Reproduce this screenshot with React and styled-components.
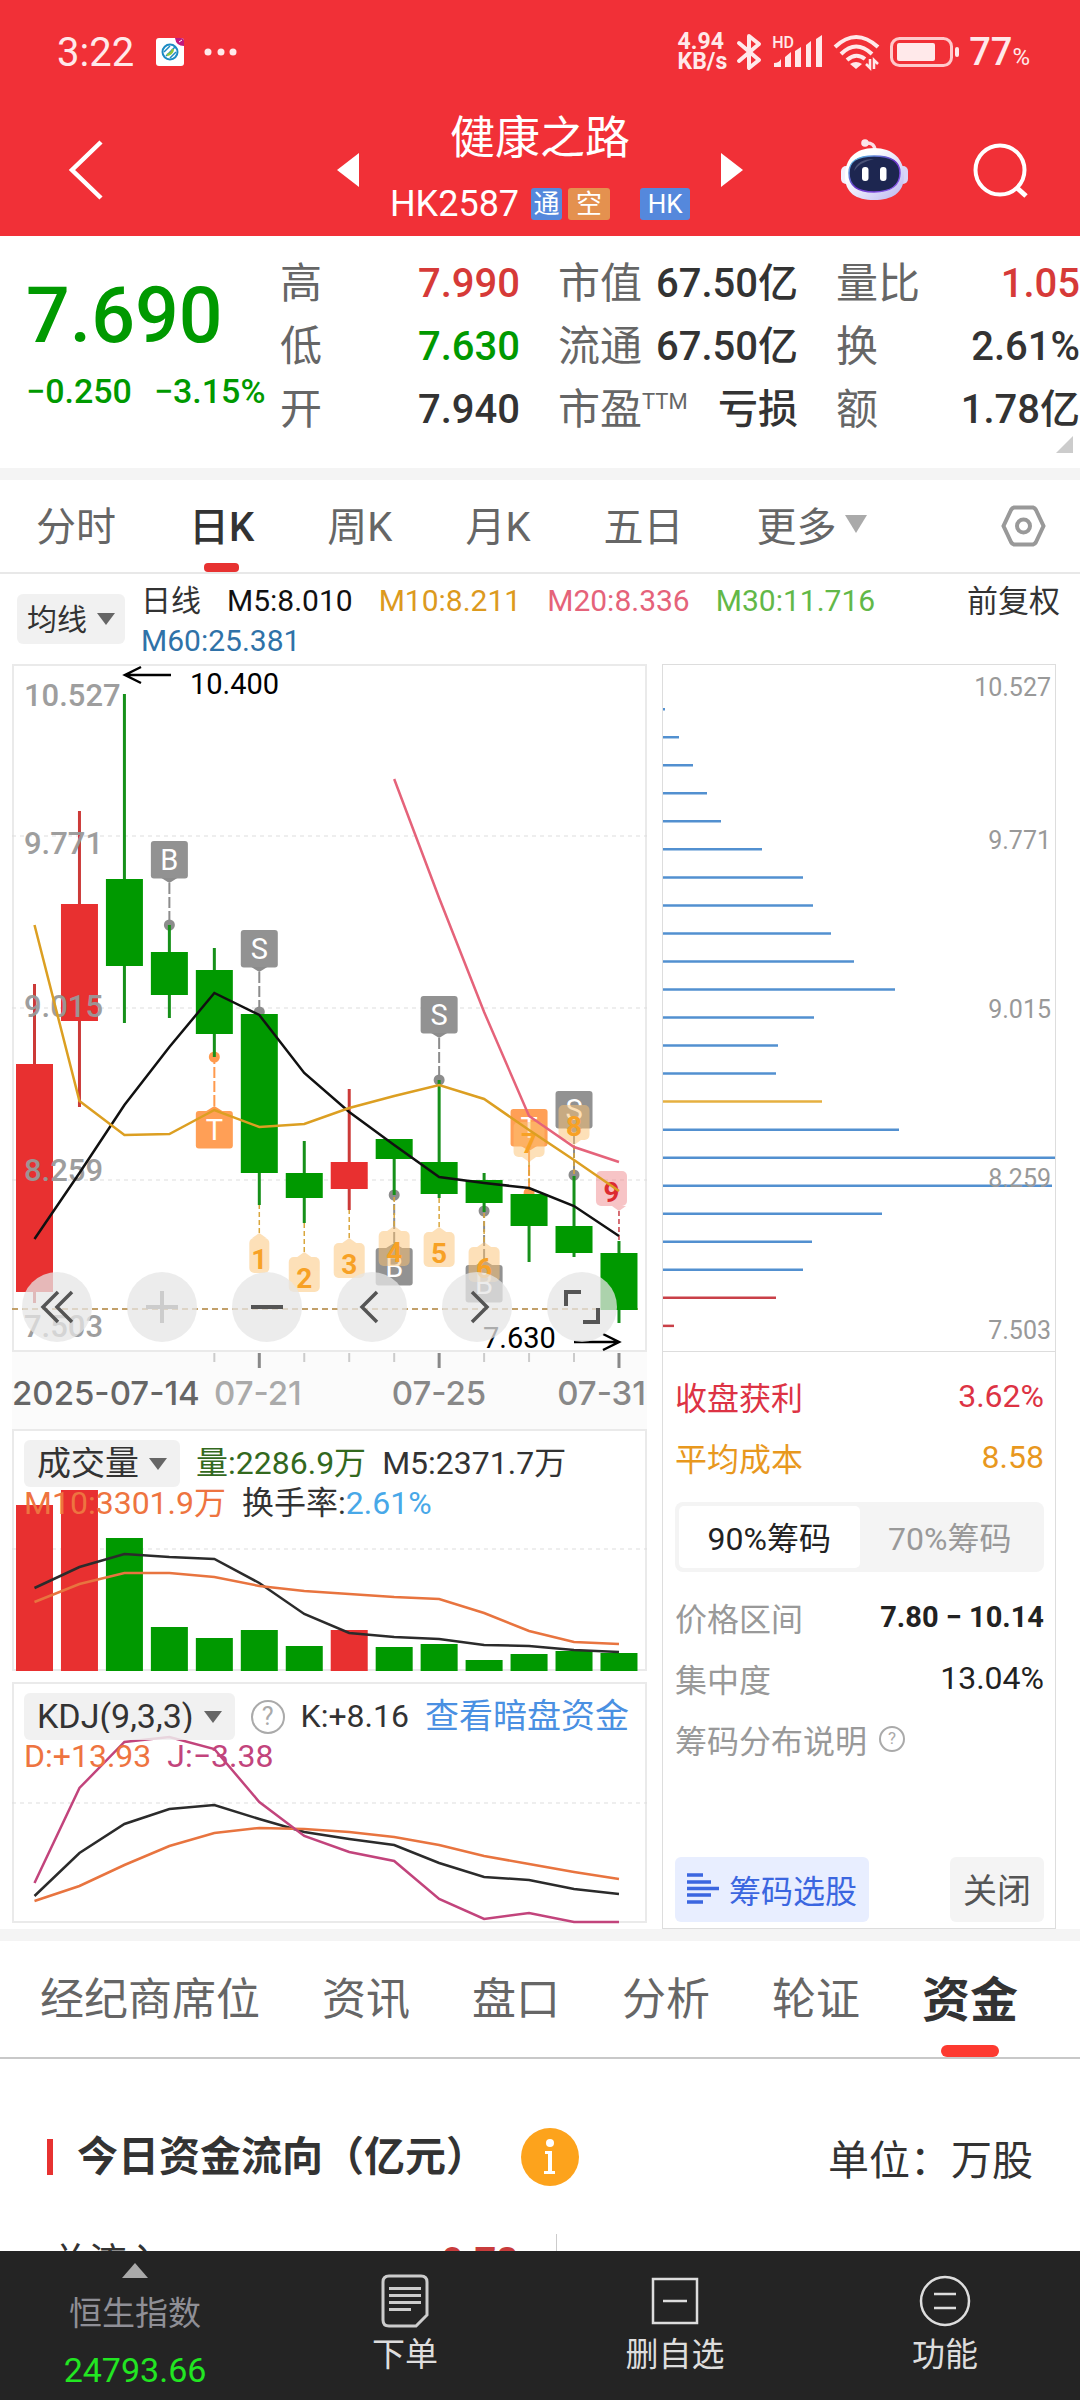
import React, { useState } from 'react';
import styled, { createGlobalStyle } from 'styled-components';

const RED = '#e73231';
const GREEN = '#009900';

const GlobalStyle = createGlobalStyle`
  * {
    box-sizing: border-box;
  }
  body {
    margin: 0;
    background: #fff;
    color: #333;
    font-family: Roboto, 'Noto Sans CJK SC', sans-serif;
  }
  button, select {
    font: inherit;
    color: inherit;
    border: 0;
    padding: 0;
    background: none;
  }
  a {
    color: inherit;
    text-decoration: none;
  }
  svg {
    display: block;
    overflow: visible;
  }
`;

const Page = styled.div`
  min-height: 100vh;
  overflow: hidden;
`;

/* ---------- header ---------- */

const Header = styled.header`
  background: #f13037;
  color: #fff;
`;

const StatusBar = styled.div`
  display: flex;
  align-items: center;
  height: 104px;
  padding: 0 50px 0 57px;
  color: #ffe9ea;
`;

const Clock = styled.span`
  font-size: 40px;
  margin-right: 22px;
`;

const StatusRight = styled.div`
  display: flex;
  align-items: center;
  gap: 10px;
  margin-left: auto;
`;

const NetSpeed = styled.span`
  font-size: 23px;
  line-height: 20px;
  font-weight: 700;
`;

const Battery = styled.span`
  font-size: 38px;
  font-weight: 500;
  small {
    font-size: 24px;
    font-weight: 400;
  }
`;

const TitleBar = styled.div`
  display: grid;
  grid-template-columns: 1fr 406px 1fr;
  align-items: center;
  height: 132px;
  padding: 0 51px;
`;

const IconButton = styled.button`
  display: flex;
`;

const BackButton = styled(IconButton)`
  padding-left: 14px;
`;

const StockSwitch = styled.div`
  display: flex;
  align-items: center;
  justify-content: space-between;
`;

const StockTitle = styled.div`
  display: flex;
  flex-direction: column;
  align-items: center;
  h1 {
    margin: 0;
    font-size: 45px;
    line-height: 68px;
    font-weight: 400;
  }
`;

const CodeRow = styled.div`
  display: flex;
  align-items: center;
  height: 62px;
  font-size: 36px;
`;

const Tag = styled.span`
  width: ${(p) => p.$width || 42}px;
  height: 32px;
  margin-left: ${(p) => p.$gap || 6}px;
  border-radius: 3px;
  background: ${(p) => p.$color};
  font-size: 26px;
  line-height: 32px;
  text-align: center;
`;

const Actions = styled.div`
  display: flex;
  align-items: center;
  justify-content: flex-end;
  gap: 64px;
`;

/* ---------- quote ---------- */

const Quote = styled.section`
  position: relative;
  display: grid;
  grid-template-columns: 216px 240px 240px 1fr;
  column-gap: 38px;
  height: 232px;
  padding: 16px 0 0 26px;
`;

const LastPrice = styled.div`
  color: ${GREEN};
  white-space: nowrap;
  strong {
    display: block;
    margin-top: 14px;
    font-size: 77px;
    line-height: 100px;
    font-weight: 500;
  }
  span {
    font-size: 34px;
    font-weight: 500;
    line-height: 50px;
    margin-right: 22px;
  }
`;

const Stats = styled.dl`
  margin: 0;
  div {
    display: flex;
    justify-content: space-between;
    height: 63px;
    line-height: 63px;
    font-size: 42px;
    white-space: nowrap;
  }
  dt {
    color: #666;
    display: flex;
  }
  sup {
    font-size: 22px;
    line-height: 48px;
    vertical-align: top;
  }
`;

const Value = styled.dd`
  margin: 0;
  font-size: 40px;
  font-weight: 500;
  color: ${(p) => p.$color || '#333'};
`;

const Corner = styled.svg`
  position: absolute;
  right: 7px;
  bottom: 15px;
`;

const Band = styled.div`
  height: 12px;
  background: #f4f4f4;
`;

/* ---------- period tabs ---------- */

const PeriodTabs = styled.nav`
  display: flex;
  align-items: center;
  gap: 73px;
  height: 94px;
  padding: 0 34px 0 36px;
  border-bottom: 2px solid #e8e8e8;
  font-size: 40px;
`;

const PeriodTab = styled.button`
  position: relative;
  display: flex;
  align-items: center;
  gap: 8px;
  height: 92px;
  padding-bottom: 4px;
  color: ${(p) => (p.$active ? '#333' : '#666')};
  font-weight: ${(p) => (p.$active ? 500 : 400)};
  &::after {
    content: '';
    display: ${(p) => (p.$active ? 'block' : 'none')};
    position: absolute;
    left: 50%;
    bottom: 0;
    width: 35px;
    height: 9px;
    margin-left: -18px;
    border-radius: 4px;
    background: ${RED};
  }
`;

const Push = styled.span`
  margin-left: auto;
`;

/* ---------- chart ---------- */

const Legend = styled.div`
  display: flex;
  align-items: center;
  height: 90px;
  padding: 0 20px 0 17px;
  font-size: 30px;
`;

const LegendItems = styled.div`
  flex: 1;
  display: flex;
  flex-wrap: wrap;
  column-gap: 26px;
  margin: 4px 48px 0 16px;
  line-height: 40px;
`;

const Adjust = styled.button`
  align-self: flex-start;
  font-size: 31px;
  line-height: 56px;
`;

const Picker = styled.label`
  display: flex;
  align-items: center;
  gap: 10px;
  height: ${(p) => p.$height || 47}px;
  padding: 0 ${(p) => p.$pad || 13}px;
  border-radius: 6px;
  background: rgba(238, 238, 238, 0.85);
  font-size: ${(p) => p.$size || 34}px;
  select {
    appearance: none;
    field-sizing: content;
  }
`;

const ChartGrid = styled.section`
  display: grid;
  grid-template-columns: 635fr 394fr;
  column-gap: 15px;
  padding: 0 24px 0 12px;
  svg text {
    font-family: Roboto, sans-serif;
  }
`;

const Pane = styled.div`
  display: grid;
  margin-bottom: ${(p) => p.$gap || 0}px;
  > * {
    grid-area: 1 / 1;
  }
`;

const Plot = styled.svg`
  width: 100%;
  height: auto;
`;

const DateLabels = styled.g`
  && text {
    font-family: Inter, sans-serif;
  }
`;

const PaneHead = styled.div`
  z-index: 1;
  align-self: start;
  display: flex;
  flex-wrap: wrap;
  align-items: center;
  column-gap: 16px;
  padding: 11px 4px 0 12px;
  font-size: 32px;
  line-height: 33px;
`;

const Tint = styled.span`
  color: ${(p) => p.$color || '#333'};
`;

const HelpButton = styled.button`
  display: grid;
  place-items: center;
  width: ${(p) => p.$size}px;
  height: ${(p) => p.$size}px;
  border: 2px solid currentColor;
  border-radius: 50%;
  color: #aaa;
  font-size: ${(p) => p.$size - 9}px;
  line-height: 1;
`;

const DarkPoolLink = styled.a`
  color: #4a90e2;
  font-size: 34px;
`;

const Controls = styled.div`
  z-index: 1;
  align-self: end;
  display: flex;
  justify-content: space-between;
  padding: 0 30px 10px 10px;
`;

const RoundButton = styled.button`
  display: grid;
  place-items: center;
  width: 70px;
  height: 70px;
  border-radius: 50%;
  background: rgba(230, 230, 230, 0.75);
  color: ${(p) => (p.$dim ? '#ccc' : '#555')};
`;

/* ---------- chips panel ---------- */

const Chips = styled.aside`
  display: flex;
  flex-direction: column;
  border: 1px solid #ddd;
  border-width: 0 1px 1px 0;
  font-size: 32px;
`;

const ChipsBody = styled.div`
  flex: 1;
  display: flex;
  flex-direction: column;
  padding: 14px 11px 6px 12px;
  border-left: 1px solid #ddd;
`;

const ChipRow = styled.div`
  display: flex;
  align-items: center;
  justify-content: space-between;
  height: 61px;
  padding-bottom: 2px;
  color: ${(p) => p.$color || '#999'};
  b {
    font-size: 29px;
    font-weight: 700;
    color: #222;
  }
  em {
    font-style: normal;
    color: #222;
  }
`;

const Explain = styled.div`
  display: flex;
  align-items: center;
  gap: 12px;
  height: 61px;
  padding-bottom: 2px;
  color: #999;
`;

const Segment = styled.div`
  display: flex;
  height: 70px;
  margin: 14px 0 15px;
  padding: 4px;
  border-radius: 8px;
  background: #f4f4f4;
`;

const SegmentButton = styled.button`
  flex: 1;
  padding-bottom: 2px;
  border-radius: 5px;
  background: ${(p) => (p.$active ? '#fff' : 'transparent')};
  color: ${(p) => (p.$active ? '#222' : '#999')};
`;

const ChipActions = styled.div`
  display: flex;
  justify-content: space-between;
  margin-top: auto;
`;

const PickButton = styled.button`
  display: flex;
  align-items: center;
  gap: 10px;
  height: 65px;
  padding: 0 12px 2px;
  border-radius: 6px;
  background: #e8eeff;
  color: #3b66e0;
`;

const CloseButton = styled.button`
  width: 94px;
  height: 65px;
  padding-bottom: 2px;
  border-radius: 6px;
  background: #f4f4f4;
  color: #555;
  font-size: 34px;
`;

/* ---------- lower tabs + fund flow ---------- */

const InfoTabs = styled.nav`
  display: flex;
  gap: 62px;
  height: 118px;
  padding-left: 40px;
  border-bottom: 2px solid #c8c8c8;
  font-size: 44px;
  white-space: nowrap;
`;

const InfoTab = styled.button`
  position: relative;
  padding-bottom: 6px;
  color: #666;
  &[aria-current] {
    color: #333;
    font-size: 48px;
    font-weight: 700;
  }
  &[aria-current]::after {
    content: '';
    position: absolute;
    left: 50%;
    bottom: 0;
    width: 58px;
    height: 12px;
    margin-left: -29px;
    border-radius: 6px;
    background: #fd3a30;
  }
`;

const FundHead = styled.div`
  display: flex;
  align-items: center;
  height: 58px;
  margin-top: 69px;
  padding: 0 47px;
  font-size: 41px;
  h2 {
    margin: 0 34px 0 0;
    padding-left: 24px;
    font-size: 41px;
    line-height: 58px;
    font-weight: 700;
    white-space: nowrap;
  }
`;

const Marker = styled.i`
  width: 6px;
  height: 36px;
  background: ${RED};
`;

const FundRow = styled.div`
  display: grid;
  grid-template-columns: 506px 1fr;
  margin: 48px 0 0 51px;
  font-size: 38px;
  line-height: 56px;
  > div {
    display: flex;
    justify-content: space-between;
    padding-right: 38px;
    border-right: 1px solid #ccc;
  }
  b {
    color: #c83c3c;
  }
`;

const BottomNav = styled.nav`
  position: fixed;
  left: 0;
  right: 0;
  bottom: 0;
  z-index: 2;
  display: grid;
  grid-template-columns: repeat(4, 1fr);
  height: 149px;
  background: #242424;
  color: #ddd;
`;

const NavButton = styled.button`
  display: flex;
  flex-direction: column;
  align-items: center;
  gap: 8px;
  padding-top: 23px;
  font-size: 33px;
  line-height: 38px;
`;

const IndexButton = styled(NavButton)`
  gap: 14px;
  padding-top: 12px;
  line-height: 43px;
  color: #8f8f96;
  strong {
    font-size: 34px;
    font-weight: 400;
    color: #22e622;
  }
`;

/* ---------- data ---------- */
// every pane under the chart shares one canvas, so x and y run on from pane to pane

const LEFT = 12;
const RIGHT = 647;
const cx = (i) => 34.5 + i * 44.96;
const toPoints = (ys, from = 0) => ys.map((y, i) => `${cx(i + from)},${y}`).join(' ');

// [up, bodyTop, bodyBottom, wickTop, wickBottom]
const candles = [
  [1, 1064, 1292, 984, 1303],
  [1, 904, 1021, 811, 1107],
  [0, 879, 966, 694, 1023],
  [0, 952, 995, 925, 1018],
  [0, 970, 1034, 948, 1057],
  [0, 1014, 1173, 1014, 1205],
  [0, 1173, 1198, 1141, 1223],
  [1, 1162, 1189, 1089, 1210],
  [0, 1139, 1159, 1139, 1195],
  [0, 1162, 1194, 1080, 1198],
  [0, 1180, 1203, 1173, 1212],
  [0, 1194, 1226, 1194, 1262],
  [0, 1226, 1253, 1176, 1257],
  [0, 1253, 1310, 1241, 1323],
];
const ma5 = [1239, 1173, 1105, 1047, 993, 1015, 1073, 1112, 1145, 1177, 1183, 1188, 1206, 1236];
const ma10 = [925, 1101, 1135, 1134, 1110, 1127, 1124, 1108, 1096, 1085, 1099, 1130, 1160, 1191];
const ma20 = [779, 898, 1012, 1116, 1147, 1162];

const axisPrices = [
  ['10.527', 706, 687],
  ['9.771', 854, 840],
  ['9.015', 1017, 1009],
  ['8.259', 1181, 1178],
  ['7.503', 1337, 1330],
];

// [candle, letter, boxTop, dotY]
const trades = [
  [3, 'B', 841, 925],
  [5, 'S', 930, 1012],
  [9, 'S', 996, 1080],
  [12, 'S', 1091, 1175],
  [4, 'T', 1111, 1057],
  [11, 'T', 1109, 1193],
  [8, 'B', 1248, 1195],
  [10, 'B', 1265, 1211],
];

// [candle, boxTop, lineEnd]
const counts = [
  [5, 1238, 1205],
  [6, 1257, 1223],
  [7, 1243, 1210],
  [8, 1231, 1195],
  [9, 1232, 1198],
  [10, 1247, 1212],
  [11, 1122, 1193],
  [12, 1105, 1175],
  [13, 1171, 1241],
];

const volumes = [1505, 1490, 1538, 1627, 1638, 1630, 1646, 1630, 1647, 1644, 1660, 1654, 1651, 1653];
const volMa5 = [1588, 1567, 1554, 1557, 1559, 1583, 1614, 1633, 1637, 1639, 1645, 1646, 1650, 1652];
const volMa10 = [1602, 1584, 1573, 1573, 1577, 1586, 1591, 1594, 1597, 1599, 1613, 1631, 1642, 1644];

const kLine = [1896, 1853, 1824, 1809, 1805, 1819, 1832, 1839, 1845, 1863, 1877, 1880, 1889, 1894];
const dLine = [1901, 1886, 1865, 1846, 1833, 1828, 1829, 1832, 1837, 1845, 1856, 1864, 1872, 1879];
const jLine = [1883, 1788, 1742, 1737, 1749, 1802, 1836, 1852, 1861, 1899, 1919, 1913, 1922, 1922];

const chipBars = [
  2, 16, 30, 44, 58, 99, 140, 150, 168, 191, 232, 151, 115, 113, 159, 236, 392, 389, 219, 149, 140, 113, 11,
];
const chipColor = (i) => (i > 20 ? '#c94048' : i === 14 ? '#e6b040' : '#5290d0');

const dates = [
  [12, '2025-07-14', '#666', 'start'],
  [214, '07-21', '#aaa', 'start'],
  [439, '07-25', '#888', 'middle'],
  [646, '07-31', '#888', 'end'],
];

/* ---------- pieces ---------- */

const Triangle = ({ size = 18, height = 12, color = '#666', up }) => (
  <svg width={size} height={height} viewBox="0 0 18 12" preserveAspectRatio="none">
    <path d={up ? 'M0 12h18L9 0z' : 'M0 0h18L9 12z'} fill={color} />
  </svg>
);

const MenuPicker = ({ label, value, ...rest }) => (
  <Picker {...rest}>
    <select aria-label={label} defaultValue={value}>
      <option>{value}</option>
    </select>
    <Triangle />
  </Picker>
);

const Frame = ({ top, height, grid = [] }) => (
  <>
    <rect x={LEFT + 1} y={top + 1} width={RIGHT - LEFT - 2} height={height - 2} fill="none" stroke="#eaeaea" strokeWidth="2" />
    {grid.map((y) => (
      <path key={y} d={`M${LEFT} ${y}H${RIGHT}`} stroke="#ddd" strokeWidth="1" strokeDasharray="4 4" />
    ))}
  </>
);

const TradeMark = ({ at, letter, top, dot }) => {
  const x = cx(at);
  const below = dot < top;
  const edge = below ? top : top + 37;
  const tip = below ? top - 5 : top + 42;
  const color = letter === 'T' ? '#ff9a4d' : '#8c8c8c';
  return (
    <g>
      <path d={`M${x} ${tip}V${dot}`} stroke={color} strokeWidth="2" strokeDasharray="11 3" />
      <circle cx={x} cy={dot} r="5.5" fill={color} />
      <path d={`M${x - 8} ${edge}L${x} ${tip}L${x + 8} ${edge}z`} fill={color} />
      <rect x={x - 18.5} y={top} width="37" height="37.5" rx="3" fill={color} opacity="0.95" />
      <text x={x} y={top + 29} fontSize="29" fill="#fff" textAnchor="middle">
        {letter}
      </text>
    </g>
  );
};

const CountMark = ({ at, n, top, end }) => {
  const last = n === 9;
  const x = cx(at);
  const w = n === 1 ? 20 : 31;
  const left = last ? x - 23 : x - w / 2;
  const below = end < top;
  const edge = below ? top : top + 35;
  const tip = below ? top - 5 : top + 40;
  const fill = last ? '#f08a8e' : '#fcc373';
  return (
    <g>
      <path d={`M${x} ${tip}V${end}`} stroke={last ? '#c94048' : '#d9a63c'} strokeWidth="1.5" strokeDasharray="5 3" />
      <g fill={fill} opacity="0.5">
        <rect x={left} y={top} width={w} height="35" rx="5" />
        <path d={`M${x - 7} ${edge}L${x} ${tip}L${x + 7} ${edge}z`} />
      </g>
      <text x={left + w / 2} y={top + 31} fontSize="28" fontWeight="700" fill={last ? '#dd2b30' : '#f7a125'} textAnchor="middle">
        {n}
      </text>
    </g>
  );
};

const PricePlot = () => (
  <Plot viewBox="12 664 635 688">
    <Frame top={664} height={688} grid={[836, 1008, 1180]} />
    <path d="M12 1309H642" stroke="#c2a06a" strokeWidth="2" strokeDasharray="6 4" />
    {trades.map(([at, letter, top, dot]) => (
      <TradeMark key={at} at={at} letter={letter} top={top} dot={dot} />
    ))}
    {candles.map(([up, top, bottom, high, low], i) => (
      <g key={i} fill={up ? '#e83030' : GREEN}>
        <rect x={cx(i) - 1.5} y={high} width="3" height={low - high} fill={up ? '#cc3a38' : '#16901a'} />
        <rect x={cx(i) - 18.5} y={top} width="37" height={bottom - top} />
      </g>
    ))}
    <g fontSize="31" fontWeight="500" fill="#999">
      {axisPrices.map(([label, y]) => (
        <text key={label} x="24" y={y} opacity="0.95">
          {label}
        </text>
      ))}
    </g>
    {counts.map(([at, top, end], i) => (
      <CountMark key={at} at={at} n={i + 1} top={top} end={end} />
    ))}
    <g fill="none" strokeWidth="2.5">
      <polyline points={toPoints(ma5)} stroke="#111" />
      <polyline points={toPoints(ma10)} stroke="#dc9f22" />
      <polyline points={toPoints(ma20, 8)} stroke="#e5637a" />
    </g>
    <g fontSize="29" fill="#000">
      <text x="190" y="694">10.400</text>
      <text x="483" y="1348">7.630</text>
    </g>
    <g fill="none" stroke="#000" strokeWidth="2.5">
      <path d="M171 675H125M141 667L125 675L141 683" />
      <path d="M574 1342H619M603 1334L619 1342L603 1350" />
    </g>
  </Plot>
);

const DateAxis = () => (
  <Plot viewBox="12 1352 635 77">
    <rect x="12" y="1352" width="635" height="77" fill="#fbfbfb" />
    {[4, 5, 6, 7, 8, 9, 10, 11, 12, 13].map((i) => {
      const major = i % 4 === 1;
      return (
        <path
          key={i}
          d={`M${cx(i)} 1353v${major ? 15 : 9}`}
          stroke={major ? '#888' : '#ccc'}
          strokeWidth={major ? 3 : 2}
        />
      );
    })}
    <DateLabels fontSize="33" fontWeight="500">
      {dates.map(([x, label, color, anchor]) => (
        <text key={label} x={x} y="1405" fill={color} textAnchor={anchor}>
          {label}
        </text>
      ))}
    </DateLabels>
  </Plot>
);

const VolumePlot = () => (
  <Plot viewBox="12 1429 635 242">
    <Frame top={1429} height={242} grid={[1549]} />
    {volumes.map((y, i) => (
      <rect key={i} x={cx(i) - 18.5} y={y} width="37" height={1671 - y} fill={candles[i][0] ? '#e83030' : GREEN} />
    ))}
    <g fill="none" strokeWidth="2.5">
      <polyline points={toPoints(volMa5)} stroke="#2b2b2b" />
      <polyline points={toPoints(volMa10)} stroke="#e8743f" />
    </g>
  </Plot>
);

const KdjPlot = () => (
  <Plot viewBox="12 1682 635 241">
    <Frame top={1682} height={241} grid={[1803]} />
    <g fill="none" strokeWidth="2.5">
      <polyline points={toPoints(kLine)} stroke="#2b2b2b" />
      <polyline points={toPoints(dLine)} stroke="#e8743f" />
      <polyline points={toPoints(jLine)} stroke="#c2447c" />
    </g>
  </Plot>
);

const ChipPlot = () => (
  <Plot viewBox="662 664 393 688">
    <rect x="662.5" y="664.5" width="393" height="687" fill="none" stroke="#ddd" />
    {chipBars.map((w, i) => (
      <path key={i} d={`M663 ${709.2 + i * 28.03}h${w}`} stroke={chipColor(i)} strokeWidth="2.5" />
    ))}
    <g fontSize="25" fill="#999" textAnchor="end">
      {axisPrices.map(([label, , y]) => (
        <text key={label} x="1051" y={y + 9}>
          {label}
        </text>
      ))}
    </g>
  </Plot>
);

const CarrierIcon = () => (
  <svg width="28" height="28" viewBox="0 0 28 28">
    <rect width="28" height="28" rx="3" fill="#fff" />
    <circle cx="14" cy="14" r="7.5" fill="none" stroke="#1b8bc4" strokeWidth="2" />
    <path d="M8 14l6-6M10 18l9-9M14 20l6-6" stroke="#1b8bc4" strokeWidth="1.5" />
    <path d="M11 17q5-1 6-6" stroke="#8cc63f" strokeWidth="2.5" fill="none" />
    <path d="M19 0h6q3 0 3 3v5q-8 0-9-8z" fill="#c2187c" />
    <path d="M23 4l3-2" stroke="#fff" />
  </svg>
);

const BluetoothIcon = () => (
  <svg width="25" height="38" viewBox="0 0 25 38" fill="none" stroke="#ffe9ea" strokeWidth="4" strokeLinejoin="round" strokeLinecap="round">
    <path d="M2 10L22 27L12 35V3L22 11L2 28" />
  </svg>
);

const HdSignal = styled.span`
  display: grid;
  > * {
    grid-area: 1 / 1;
  }
  b {
    font-size: 16px;
    font-weight: 500;
    line-height: 16px;
  }
`;

const SignalIcon = () => (
  <HdSignal>
    <b>HD</b>
    <svg width="51" height="34" viewBox="0 0 51 34" fill="#ffe9ea">
      <path d="M2 32v-4q5 0 7-4v8zM13 32V22l6-5v15zM23 32V16l6-4v20zM34 32V10l5-4v26zM44 32V4l6-4v32z" />
    </svg>
  </HdSignal>
);

const WifiIcon = () => (
  <svg width="47" height="35" viewBox="0 0 47 35" fill="none" stroke="#ffe9ea" strokeWidth="4">
    <path d="M2 12Q23 -8 45 12M8 19Q23 4 39 19M14 25Q23 17 32 24" />
    <path d="M17 29q6-4 12 0l-6 5z" fill="#ffe9ea" stroke="none" />
    <path d="M37 24v9l-4-4M41 34v-9l4 4" strokeWidth="2.5" />
  </svg>
);

const BatteryIcon = () => (
  <svg width="69" height="31" viewBox="0 0 69 31">
    <rect x="1.5" y="1.5" width="60" height="27" rx="8" fill="none" stroke="#ffc9cb" strokeWidth="3" />
    <rect x="7" y="6" width="38" height="18" rx="2" fill="#ffe9ea" />
    <rect x="65" y="10" width="4" height="10" rx="2" fill="#ffe9ea" />
  </svg>
);

const RobotIcon = () => (
  <svg width="67" height="62" viewBox="0 0 67 62">
    <defs>
      <linearGradient id="shell" x1="0" y1="0" x2="1" y2="1">
        <stop offset="0.3" stopColor="#fff" />
        <stop offset="1" stopColor="#b9b4f0" />
      </linearGradient>
      <linearGradient id="rim" x1="0" y1="0" x2="1" y2="1">
        <stop offset="0" stopColor="#5ad1e6" />
        <stop offset="0.5" stopColor="#6a35c8" />
        <stop offset="1" stopColor="#8b5cf0" />
      </linearGradient>
    </defs>
    <path d="M24 4q10-1 10 8" fill="none" stroke="#fbdfe6" strokeWidth="3.5" />
    <circle cx="24" cy="4" r="3.8" fill="#fbe6ea" />
    <rect x="0" y="27" width="10" height="18" rx="5" fill="#f3eefc" />
    <rect x="57" y="27" width="10" height="18" rx="5" fill="#d9d4f7" />
    <path d="M33 9C52 9 63 20 63 37S51 61 33 61S4 54 4 37S14 9 33 9z" fill="url(#shell)" />
    <path d="M33 17C50 17 59 22 59 34S50 53 33 53S8 46 8 34S16 17 33 17z" fill="#1d2650" stroke="url(#rim)" strokeWidth="1.5" />
    <path d="M13 32q3-12 20-12q-14 3-20 12z" fill="#4a5276" />
    <rect x="21" y="28" width="6.5" height="14" rx="3" fill="#fff" />
    <rect x="39" y="28" width="6.5" height="14" rx="3" fill="#fff" />
  </svg>
);

const periods = ['分时', '日K', '周K', '月K', '五日'];
const infoTabs = ['经纪商席位', '资讯', '盘口', '分析', '轮证', '资金'];

const App = () => {
  const [period, setPeriod] = useState('日K');
  const [info, setInfo] = useState('资金');
  const [share, setShare] = useState(90);

  return (
    <Page>
      <GlobalStyle />
      <Header>
        <StatusBar>
          <Clock>3:22</Clock>
          <CarrierIcon />
          <svg width="54" height="8" viewBox="0 0 54 8" fill="#ffe9ea">
            <circle cx="24" cy="4" r="3.5" />
            <circle cx="37" cy="4" r="3.5" />
            <circle cx="49" cy="4" r="3.5" />
          </svg>
          <StatusRight>
            <NetSpeed>
              4.94
              <br />
              KB/s
            </NetSpeed>
            <BluetoothIcon />
            <SignalIcon />
            <WifiIcon />
            <BatteryIcon />
            <Battery>
              77<small>%</small>
            </Battery>
          </StatusRight>
        </StatusBar>
        <TitleBar>
          <BackButton aria-label="返回">
            <svg width="40" height="60" viewBox="0 0 40 60" fill="none" stroke="#fff" strokeWidth="4.5">
              <path d="M36 2L7 30L36 58" />
            </svg>
          </BackButton>
          <StockSwitch>
            <IconButton aria-label="上一只">
              <svg width="22" height="34" viewBox="0 0 22 34">
                <path d="M22 0v34L0 17z" fill="#fff" />
              </svg>
            </IconButton>
            <StockTitle>
              <h1>健康之路</h1>
              <CodeRow>
                HK2587
                <Tag $color="#5588dc" $width={31} $gap={12}>通</Tag>
                <Tag $color="#e4914f">空</Tag>
                <Tag $color="#5588dc" $width={50} $gap={30}>HK</Tag>
              </CodeRow>
            </StockTitle>
            <IconButton aria-label="下一只">
              <svg width="22" height="34" viewBox="0 0 22 34">
                <path d="M0 0v34l22-17z" fill="#fff" />
              </svg>
            </IconButton>
          </StockSwitch>
          <Actions>
            <IconButton aria-label="助手">
              <RobotIcon />
            </IconButton>
            <IconButton aria-label="搜索">
              <svg width="57" height="56" viewBox="0 0 57 56" fill="none" stroke="#fff" strokeWidth="4">
                <circle cx="28" cy="28" r="24.5" />
                <path d="M44 45l10 9" strokeWidth="5" />
              </svg>
            </IconButton>
          </Actions>
        </TitleBar>
      </Header>

      <Quote>
        <LastPrice>
          <strong>7.690</strong>
          <span>−0.250</span>
          <span>−3.15%</span>
        </LastPrice>
        <Stats>
          <div><dt>高</dt><Value $color="#d63a38">7.990</Value></div>
          <div><dt>低</dt><Value $color={GREEN}>7.630</Value></div>
          <div><dt>开</dt><Value>7.940</Value></div>
        </Stats>
        <Stats>
          <div><dt>市值</dt><Value>67.50亿</Value></div>
          <div><dt>流通</dt><Value>67.50亿</Value></div>
          <div><dt>市盈<sup>TTM</sup></dt><Value>亏损</Value></div>
        </Stats>
        <Stats>
          <div><dt>量比</dt><Value $color="#d63a38">1.05</Value></div>
          <div><dt>换</dt><Value>2.61%</Value></div>
          <div><dt>额</dt><Value>1.78亿</Value></div>
        </Stats>
        <Corner width="17" height="17" viewBox="0 0 17 17">
          <path d="M17 0v17H0z" fill="#ccc" />
        </Corner>
      </Quote>
      <Band />

      <PeriodTabs>
        {periods.map((name) => (
          <PeriodTab key={name} $active={name === period} onClick={() => setPeriod(name)}>
            {name}
          </PeriodTab>
        ))}
        <PeriodTab>
          更多
          <Triangle size={22} height={18} color="#aaa" />
        </PeriodTab>
        <Push>
          <IconButton aria-label="设置">
            <svg width="45" height="42" viewBox="0 0 45 42" fill="none" stroke="#999" strokeWidth="4">
              <path d="M13 2.5H32Q34 3 35 5L42.5 21L35 37Q34 39 32 39.5H13Q11 39 10 37L2.5 21L10 5Q11 3 13 2.5z" />
              <circle cx="22.5" cy="21" r="6.5" />
            </svg>
          </IconButton>
        </Push>
      </PeriodTabs>

      <Legend>
        <MenuPicker label="指标" value="均线" $height={50} $pad={10} $size={30} />
        <LegendItems>
          <Tint>日线</Tint>
          <Tint $color="#111">M5:8.010</Tint>
          <Tint $color="#dc9a1e">M10:8.211</Tint>
          <Tint $color="#e5637a">M20:8.336</Tint>
          <Tint $color="#62b848">M30:11.716</Tint>
          <Tint $color="#2f72a8">M60:25.381</Tint>
        </LegendItems>
        <Adjust>前复权</Adjust>
      </Legend>

      <ChartGrid>
        <div>
          <Pane>
            <PricePlot />
            <Controls>
              <RoundButton aria-label="最早">
                <svg width="32" height="32" viewBox="0 0 32 32" fill="none" stroke="currentColor" strokeWidth="3.5">
                  <path d="M17 1L2 16L17 31M31 1L16 16L31 31" />
                </svg>
              </RoundButton>
              <RoundButton aria-label="放大" $dim>
                <svg width="32" height="32" viewBox="0 0 32 32" stroke="currentColor" strokeWidth="4">
                  <path d="M0 16h32M16 0v32" />
                </svg>
              </RoundButton>
              <RoundButton aria-label="缩小">
                <svg width="32" height="32" viewBox="0 0 32 32" stroke="currentColor" strokeWidth="4">
                  <path d="M0 16h32" />
                </svg>
              </RoundButton>
              <RoundButton aria-label="左移">
                <svg width="32" height="32" viewBox="0 0 32 32" fill="none" stroke="currentColor" strokeWidth="3.5">
                  <path d="M21 1L6 16L21 31" />
                </svg>
              </RoundButton>
              <RoundButton aria-label="右移">
                <svg width="32" height="32" viewBox="0 0 32 32" fill="none" stroke="currentColor" strokeWidth="3.5">
                  <path d="M11 1L26 16L11 31" />
                </svg>
              </RoundButton>
              <RoundButton aria-label="全屏">
                <svg width="36" height="36" viewBox="0 0 36 36" fill="none" stroke="currentColor" strokeWidth="4">
                  <path d="M2 17V3h15M34 19v14H19" />
                </svg>
              </RoundButton>
            </Controls>
          </Pane>
          <DateAxis />
          <Pane $gap={11}>
            <VolumePlot />
            <PaneHead>
              <MenuPicker label="副图一" value="成交量" />
              <Tint $color="#33691e">量:2286.9万</Tint>
              <Tint>M5:2371.7万</Tint>
              <Tint $color="#ee7440">M10:3301.9万</Tint>
              <span>
                换手率:<Tint $color="#48a8e8">2.61%</Tint>
              </span>
            </PaneHead>
          </Pane>
          <Pane $gap={6}>
            <KdjPlot />
            <PaneHead>
              <MenuPicker label="副图二" value="KDJ(9,3,3)" />
              <HelpButton $size={34} aria-label="指标说明">?</HelpButton>
              <Tint>K:+8.16</Tint>
              <DarkPoolLink href="#">查看暗盘资金</DarkPoolLink>
              <Tint $color="#ee7440">D:+13.93</Tint>
              <Tint $color="#c2447c">J:−3.38</Tint>
            </PaneHead>
          </Pane>
        </div>

        <Chips>
          <ChipPlot />
          <ChipsBody>
            <ChipRow $color="#dd3344">
              <span>收盘获利</span>
              <span>3.62%</span>
            </ChipRow>
            <ChipRow $color="#e8981e">
              <span>平均成本</span>
              <span>8.58</span>
            </ChipRow>
            <Segment>
              {[90, 70].map((n) => (
                <SegmentButton key={n} $active={n === share} onClick={() => setShare(n)}>
                  {n}%筹码
                </SegmentButton>
              ))}
            </Segment>
            <ChipRow>
              <span>价格区间</span>
              <b>7.80 − 10.14</b>
            </ChipRow>
            <ChipRow>
              <span>集中度</span>
              <em>13.04%</em>
            </ChipRow>
            <Explain>
              筹码分布说明
              <HelpButton $size={26} aria-label="筹码说明">?</HelpButton>
            </Explain>
            <ChipActions>
              <PickButton>
                <svg width="32" height="31" viewBox="0 0 32 31" stroke="#3b66e0" strokeWidth="3.5">
                  <path d="M0 2h16M0 9h24M0 15.5h32M0 22h24M0 29h16" />
                </svg>
                筹码选股
              </PickButton>
              <CloseButton>关闭</CloseButton>
            </ChipActions>
          </ChipsBody>
        </Chips>
      </ChartGrid>
      <Band />

      <InfoTabs>
        {infoTabs.map((name) => (
          <InfoTab key={name} aria-current={name === info ? 'page' : undefined} onClick={() => setInfo(name)}>
            {name}
          </InfoTab>
        ))}
      </InfoTabs>

      <section>
        <FundHead>
          <Marker />
          <h2>今日资金流向（亿元）</h2>
          <IconButton aria-label="说明">
            <svg width="58" height="58" viewBox="0 0 58 58">
              <circle cx="29" cy="29" r="29" fill="#fda31c" />
              <circle cx="29" cy="15" r="4" fill="#fff" />
              <path d="M24 23h7v20h3v3H23v-3h4V26h-3z" fill="#fff" />
            </svg>
          </IconButton>
          <Push>单位：万股</Push>
        </FundHead>
        <FundRow>
          <div>
            <span>总流入</span>
            <b>0.78</b>
          </div>
        </FundRow>
      </section>

      <BottomNav>
        <IndexButton>
          <Triangle size={26} height={15} color="#aaa" up />
          恒生指数
          <strong>24793.66</strong>
        </IndexButton>
        <NavButton>
          <svg width="48" height="54" viewBox="0 0 48 54" fill="none" stroke="#ccc" strokeWidth="3">
            <path d="M8 2H40Q46 2 46 8V41L35 52H8Q2 52 2 46V8Q2 2 8 2z" />
            <path d="M8 14.5H40M8 21.5H40M8 28.5H40M8 35.5H30" />
          </svg>
          下单
        </NavButton>
        <NavButton>
          <svg width="48" height="54" viewBox="0 0 48 54" fill="none" stroke="#ddd" strokeWidth="2.5">
            <rect x="2" y="5" width="44" height="44" />
            <path d="M12 27H36" />
          </svg>
          删自选
        </NavButton>
        <NavButton>
          <svg width="52" height="54" viewBox="0 0 52 54" fill="none" stroke="#ddd" strokeWidth="2.5">
            <circle cx="26" cy="27" r="24" />
            <path d="M15 20H37M15 34H37" />
          </svg>
          功能
        </NavButton>
      </BottomNav>
    </Page>
  );
};

export default App;
